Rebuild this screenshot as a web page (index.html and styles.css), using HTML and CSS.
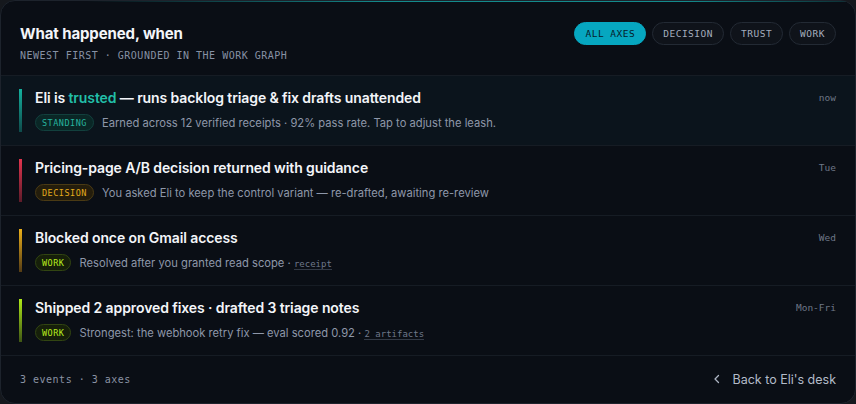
FILE: index.html
```html
<!DOCTYPE html>
<html lang="en">
<head>
  <meta charset="UTF-8" />
  <meta name="viewport" content="width=device-width, initial-scale=1" />
  <title>What happened, when</title>
  <link rel="stylesheet" href="styles.css">
</head>
<body>
  <div class="panel">
    <div class="panel-head">
      <div class="head-text">
        <h1>What happened, when</h1>
        <div class="sub">NEWEST FIRST · GROUNDED IN THE WORK GRAPH</div>
      </div>
      <div class="chips">
        <span class="chip active">ALL AXES</span>
        <span class="chip">DECISION</span>
        <span class="chip">TRUST</span>
        <span class="chip">WORK</span>
      </div>
    </div>

    <!-- 出来事リスト -->
    <div class="event trust highlight">
      <div class="event-body">
        <div class="event-title">Eli is <span class="hl">trusted</span> — runs backlog triage &amp; fix drafts unattended</div>
        <div class="event-meta">
          <span class="badge standing">STANDING</span>
          <span class="desc">Earned across 12 verified receipts · 92% pass rate. Tap to adjust the leash.</span>
        </div>
      </div>
      <div class="when">now</div>
    </div>

    <div class="event decision">
      <div class="event-body">
        <div class="event-title">Pricing-page A/B decision returned with guidance</div>
        <div class="event-meta">
          <span class="badge decision-b">DECISION</span>
          <span class="desc">You asked Eli to keep the control variant — re-drafted, awaiting re-review</span>
        </div>
      </div>
      <div class="when">Tue</div>
    </div>

    <div class="event blocked">
      <div class="event-body">
        <div class="event-title">Blocked once on Gmail access</div>
        <div class="event-meta">
          <span class="badge work">WORK</span>
          <span class="desc">Resolved after you granted read scope · <span class="ref">receipt</span></span>
        </div>
      </div>
      <div class="when">Wed</div>
    </div>

    <div class="event shipped">
      <div class="event-body">
        <div class="event-title">Shipped 2 approved fixes · drafted 3 triage notes</div>
        <div class="event-meta">
          <span class="badge work">WORK</span>
          <span class="desc">Strongest: the webhook retry fix — eval scored 0.92 · <span class="ref">2 artifacts</span></span>
        </div>
      </div>
      <div class="when">Mon-Fri</div>
    </div>

    <div class="panel-foot">
      <span class="count">3 events · 3 axes</span>
      <span class="back">
        <svg width="12" height="12" viewBox="0 0 12 12" fill="none"><path d="M7.5 2.5L4 6l3.5 3.5" stroke="#aeb6c4" stroke-width="1.3" stroke-linecap="round" stroke-linejoin="round"/></svg>
        Back to Eli's desk
      </span>
    </div>
  </div>
</body>
</html>
```

FILE: styles.css
```css
body {
  margin: 0;
  padding: 0;
  background: #15181d;
  font-family: Inter, "Noto Sans", sans-serif;
  color: #e8ecf2;
}
.panel {
  position: relative;
  height: 404px;
  box-sizing: border-box;
  background: #0a0e15;
  border: 1px solid #1d232c;
  border-radius: 15px;
  overflow: hidden;
}
.panel::before {
  content: "";
  position: absolute;
  top: 0;
  left: 0;
  right: 0;
  height: 1px;
  background: linear-gradient(90deg, rgba(20,160,160,0) 10%, #138a8c 45%, #138a8c 80%, rgba(20,160,160,0.2) 100%);
}
.panel-head {
  display: flex;
  justify-content: space-between;
  align-items: flex-start;
  padding: 23px 19px 12px 19px;
  border-bottom: 1px solid #161c24;
}
h1 {
  margin: 0;
  font-size: 15px;
  line-height: 20px;
  font-weight: 700;
  color: #f3f5f9;
  letter-spacing: -0.1px;
}
.sub {
  margin-top: 5px;
  font-family: "DejaVu Sans Mono", monospace;
  font-size: 10px;
  line-height: 14px;
  letter-spacing: 0.5px;
  color: #8791a4;
}
.chips {
  display: flex;
  gap: 6px;
  margin-top: -2px;
}
.chip {
  height: 23px;
  box-sizing: border-box;
  display: flex;
  align-items: center;
  padding: 0 10px;
  border-radius: 12px;
  border: 1px solid #232a34;
  background: #0f131a;
  font-family: "DejaVu Sans Mono", monospace;
  font-size: 9.5px;
  letter-spacing: 0.5px;
  color: #a4adbd;
}
.chip.active {
  background: #06a7c0;
  border-color: #06a7c0;
  color: #06202a;
}

.event {
  display: flex;
  justify-content: space-between;
  align-items: flex-start;
  height: 70px;
  box-sizing: border-box;
  padding: 13px 19px 0 18px;
  border-bottom: 1px solid #161c24;
}
.event.highlight { background: #0b141c; }
.event-body {
  border-left: 3px solid;
  padding-left: 13px;
  height: 43px;
  border-image: linear-gradient(180deg, #14b3a0, rgba(20,150,140,0.4)) 1;
}
.decision .event-body { border-image: linear-gradient(180deg, #e5354f, rgba(170,40,60,0.5)) 1; }
.blocked .event-body { border-image: linear-gradient(180deg, #f0b31a, rgba(150,100,20,0.5)) 1; }
.shipped .event-body { border-image: linear-gradient(180deg, #b2ee18, rgba(110,150,20,0.5)) 1; }
.event-title {
  font-size: 14px;
  line-height: 18px;
  font-weight: 600;
  color: #f3f5f9;
  letter-spacing: -0.1px;
}
.hl { color: #22bfa8; }
.event-meta {
  display: flex;
  align-items: center;
  gap: 8px;
  margin-top: 7px;
}
.badge {
  height: 17px;
  box-sizing: border-box;
  display: flex;
  align-items: center;
  padding: 0 6px;
  border-radius: 9px;
  border: 1px solid;
  font-family: "DejaVu Sans Mono", monospace;
  font-size: 8.5px;
  letter-spacing: 0.5px;
}
.standing { background: #0a2726; border-color: #12403d; color: #27b49f; }
.decision-b { background: #241d0c; border-color: #4a3a14; color: #e3ab1c; }
.work { background: #161f0a; border-color: #324512; color: #b8ec1e; }
.desc {
  font-size: 11.2px;
  color: #8e97a9;
}
.ref {
  font-family: "DejaVu Sans Mono", monospace;
  font-size: 9px;
  color: #6f788a;
  border-bottom: 1px solid #333a46;
}
.when {
  font-family: "DejaVu Sans Mono", monospace;
  font-size: 9.5px;
  line-height: 18px;
  color: #6e7787;
}

.panel-foot {
  display: flex;
  justify-content: space-between;
  align-items: center;
  height: 46px;
  padding: 0 19px;
}
.count {
  font-family: "DejaVu Sans Mono", monospace;
  font-size: 10px;
  letter-spacing: 0.5px;
  color: #8a93a4;
}
.back {
  display: flex;
  align-items: center;
  gap: 9px;
  font-size: 12.5px;
  color: #b3bbc9;
}
```
